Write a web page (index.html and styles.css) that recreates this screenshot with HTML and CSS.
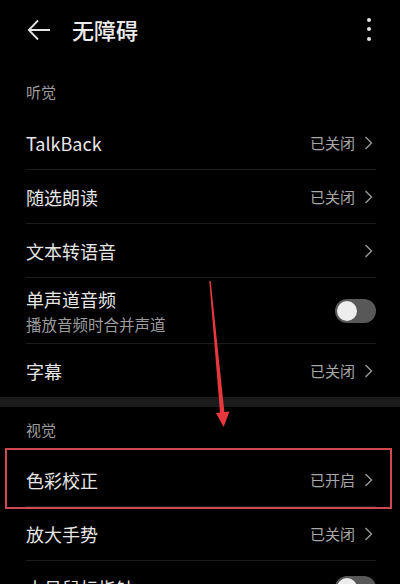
FILE: index.html
```html
<!DOCTYPE html>
<html>
  <head>
    <meta charset="UTF-8">
    <title>无障碍</title>
    <link rel="stylesheet" href="styles.css">
  </head>
  <body>
    <div class="page">
      <header class="bar">
        <svg class="back" width="24" height="22" viewBox="0 0 24 22">
          <path d="M23 11H2 M11 1.5 L1.8 11 L11 20.5" fill="none" stroke="#e4e4e4" stroke-width="1.8"/>
        </svg>
        <h1 class="title">无障碍</h1>
        <div class="more"><i></i><i></i><i></i></div>
      </header>

      <div class="group-title first">听觉</div>
      <ul class="list">
        <li class="row">
          <span class="label">TalkBack</span>
          <span class="value">已关闭</span>
          <svg class="chev" width="9" height="14" viewBox="0 0 9 14"><path d="M1.5 1 L7.5 7 L1.5 13" fill="none" stroke="#9a9a9a" stroke-width="1.4"/></svg>
        </li>
        <li class="row">
          <span class="label">随选朗读</span>
          <span class="value">已关闭</span>
          <svg class="chev" width="9" height="14" viewBox="0 0 9 14"><path d="M1.5 1 L7.5 7 L1.5 13" fill="none" stroke="#9a9a9a" stroke-width="1.4"/></svg>
        </li>
        <li class="row">
          <span class="label">文本转语音</span>
          <svg class="chev" width="9" height="14" viewBox="0 0 9 14"><path d="M1.5 1 L7.5 7 L1.5 13" fill="none" stroke="#9a9a9a" stroke-width="1.4"/></svg>
        </li>
        <li class="row tall">
          <div class="texts">
            <span class="label">单声道音频</span>
            <span class="sub">播放音频时合并声道</span>
          </div>
          <span class="switch"><b></b></span>
        </li>
        <li class="row">
          <span class="label">字幕</span>
          <span class="value">已关闭</span>
          <svg class="chev" width="9" height="14" viewBox="0 0 9 14"><path d="M1.5 1 L7.5 7 L1.5 13" fill="none" stroke="#9a9a9a" stroke-width="1.4"/></svg>
        </li>
      </ul>

      <div class="band"></div>

      <div class="group-title">视觉</div>
      <ul class="list">
        <li class="row">
          <span class="label">色彩校正</span>
          <span class="value">已开启</span>
          <svg class="chev" width="9" height="14" viewBox="0 0 9 14"><path d="M1.5 1 L7.5 7 L1.5 13" fill="none" stroke="#9a9a9a" stroke-width="1.4"/></svg>
        </li>
        <li class="row">
          <span class="label">放大手势</span>
          <span class="value">已关闭</span>
          <svg class="chev" width="9" height="14" viewBox="0 0 9 14"><path d="M1.5 1 L7.5 7 L1.5 13" fill="none" stroke="#9a9a9a" stroke-width="1.4"/></svg>
        </li>
        <li class="row">
          <span class="label">大号鼠标指针</span>
          <span class="switch"><b></b></span>
        </li>
      </ul>

      <!-- 标注 -->
      <div class="mark-box"></div>
      <svg class="mark-arrow" width="400" height="584" viewBox="0 0 400 584">
        <polygon points="209.3,281 210.7,281 224.4,412 229.5,411.5 223.6,427 216,413 220,412.5" fill="#e8383e"/>
      </svg>
    </div>
  </body>
</html>
```

FILE: styles.css
```css
html, body{
    margin: 0;
    padding: 0;
    background: #000;
}
body{
    font-family: "Noto Sans CJK SC", "Noto Sans", sans-serif;
    color: #e6e6e6;
}
.page{
    position: relative;
    width: 400px;
    height: 584px;
    overflow: hidden;
}
.bar{
    height: 58px;
    display: flex;
    align-items: center;
    padding: 0 0 0 27px;
    box-sizing: border-box;
}
.back{
    display: block;
    margin-top: 2px;
}
.title{
    margin: 0 0 0 21px;
    font-size: 22px;
    font-weight: 500;
    line-height: 30px;
    color: #ececec;
    flex: 1;
}
.more{
    width: 4px;
    margin-right: 29px;
    display: flex;
    flex-direction: column;
    gap: 5.5px;
}
.more i{
    display: block;
    width: 4px;
    height: 4px;
    border-radius: 50%;
    background: #e4e4e4;
}
.group-title{
    font-size: 15px;
    line-height: 20px;
    color: #9c9c9c;
    padding: 13px 26px 13px;
}
.group-title.first{
    padding: 24px 26px 14px;
}
.list{
    list-style: none;
    margin: 0 24px 0 26px;
    padding: 0;
}
.row{
    height: 53px;
    display: flex;
    align-items: center;
    border-bottom: 1px solid #1c1c1c;
}
.row:last-child{
    border-bottom: none;
}
.row.tall{
    height: 65px;
}
.label{
    font-size: 18px;
    line-height: 24px;
    flex: 1;
}
.texts{
    flex: 1;
    display: flex;
    flex-direction: column;
    gap: 2px;
}
.sub{
    font-size: 15.5px;
    line-height: 22px;
    color: #9c9c9c;
}
.value{
    font-size: 15px;
    color: #a8a8a8;
    margin-right: 9px;
}
.chev{
    display: block;
    margin-right: 3px;
}
.switch{
    position: relative;
    display: block;
    width: 41px;
    height: 24px;
    border-radius: 12px;
    background: #585858;
}
.switch b{
    position: absolute;
    left: 2px;
    top: 2px;
    width: 20px;
    height: 20px;
    border-radius: 50%;
    background: #ededed;
}
.band{
    height: 10px;
    background: #1b1b1b;
}
.mark-box{
    position: absolute;
    left: 5px;
    top: 448px;
    width: 387px;
    height: 61px;
    box-sizing: border-box;
    border: 2px solid #cf4a50;
}
.mark-arrow{
    position: absolute;
    left: 0;
    top: 0;
    pointer-events: none;
}
```
